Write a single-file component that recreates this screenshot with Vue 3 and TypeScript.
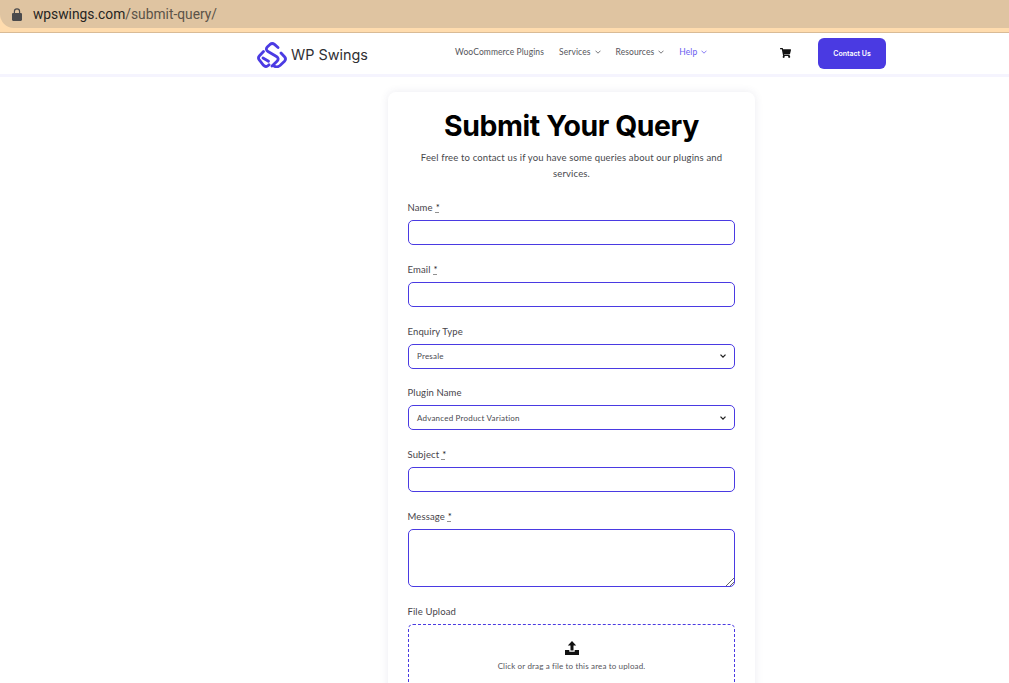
<script setup lang="ts">
interface Field {
  label: string
  required: boolean
  kind: 'input' | 'select' | 'textarea'
  value?: string
}
const navItems = [
  { label: 'Services', active: false },
  { label: 'Resources', active: false },
  { label: 'Help', active: true },
]
const fields: Field[] = [
  { label: 'Name', required: true, kind: 'input' },
  { label: 'Email', required: true, kind: 'input' },
  { label: 'Enquiry Type', required: false, kind: 'select', value: 'Presale' },
  { label: 'Plugin Name', required: false, kind: 'select', value: 'Advanced Product Variation' },
  { label: 'Subject', required: true, kind: 'input' },
  { label: 'Message', required: true, kind: 'textarea' },
]
</script>

<template>
  <div class="page">
    <div class="browser">
      <div class="urlbar">
        <svg class="lock" width="10" height="13" viewBox="0 0 10 13">
          <path fill="#4a4a4c" d="M1.2 5h.6V3.400a3.200 3.200 0 0 1 6.400 0V5h.6c.6 0 1.200.5 1.200 1.100v5.700c0 .6-.6 1.200-1.200 1.200H1.200C.6 13 0 12.400 0 11.800V6.100C0 5.500.6 5 1.200 5zM3 5h4V3.400a2 2 0 0 0-4 0z" />
        </svg>
        <span class="url"><span class="host">wpswings.com</span>/submit-query/</span>
      </div>
    </div>

    <header class="header">
      <div class="brand">
        <svg class="logo" width="30" height="26" viewBox="0 0 30 26" fill="none" stroke="#4b3be3" stroke-width="2.800" stroke-linecap="round" stroke-linejoin="round">
          <path d="M21 5.500 17.500 2.400C16 1.200 14.500 1.200 13 2.400L10.500 4.800C8.800 6.500 9 8.300 11 9.500L19.500 14.500C21.500 15.700 21.700 17.500 20 19.200L15 24" />
          <path d="M6.500 9.500 2.500 13.800C1.200 15.200 1.200 16.800 2.500 18.200L6.500 23.300C8 24.800 9.800 24.800 11.200 23.500L12 22.700" />
          <path d="M6 16 11.500 19.300" />
          <path d="M24 11 27.500 14.800C28.800 16.200 28.800 17.800 27.500 19.200L23 23.500C21 25.200 19 25.200 17 24" />
        </svg>
        <span class="brand-name">WP Swings</span>
      </div>
      <nav class="nav">
        <a class="nav-link plain">WooCommerce Plugins</a>
        <a v-for="item in navItems" :key="item.label" class="nav-link" :class="{ active: item.active }">
          {{ item.label }}
          <svg width="6" height="4" viewBox="0 0 6 4" fill="none" stroke="currentColor" stroke-width=".8"><path d="M.5.700 3 3.200 5.500.700" /></svg>
        </a>
      </nav>
      <svg class="cart" width="11" height="10" viewBox="0 0 576 512">
        <path fill="#111" d="M528.120 301.319l47.273-208C578.806 78.301 567.391 64 551.990 64H159.208l-9.166-44.810C147.758 8.021 137.930 0 126.529 0H24C10.745 0 0 10.745 0 24v16c0 13.255 10.745 24 24 24h69.883l70.248 343.435C147.325 417.100 136 435.222 136 456c0 30.928 25.072 56 56 56s56-25.072 56-56c0-15.674-6.447-29.835-16.824-40h209.647C430.447 426.165 424 440.326 424 456c0 30.928 25.072 56 56 56s56-25.072 56-56c0-22.172-12.888-41.332-31.579-50.405l5.517-24.276c3.413-15.018-8.002-29.319-23.403-29.319H218.117l-6.545-32h293.145c11.206 0 20.920-7.754 23.403-18.681z" />
      </svg>
      <a class="cta">Contact Us</a>
    </header>

    <main class="main">
      <section class="card">
        <h1 class="title">Submit Your Query</h1>
        <p class="intro">Feel free to contact us if you have some queries about our plugins and services.</p>

        <div class="fields">
          <div v-for="f in fields" :key="f.label" class="field">
            <label class="label">{{ f.label }}<abbr v-if="f.required" class="req">*</abbr></label>
            <div v-if="f.kind === 'input'" class="control"></div>
            <div v-else-if="f.kind === 'select'" class="control select">
              <span>{{ f.value }}</span>
              <svg width="6" height="4" viewBox="0 0 6 4" fill="none" stroke="#222" stroke-width="1.300"><path d="M.5.600 3 3.100 5.500.600" /></svg>
            </div>
            <div v-else class="control area">
              <svg class="grip" width="9" height="9" viewBox="0 0 9 9" stroke="#666" stroke-width="1"><path d="M1 9 9 1M5 9l4-4" /></svg>
            </div>
          </div>

          <div class="field">
            <label class="label">File Upload</label>
            <div class="drop">
              <svg width="14" height="14" viewBox="0 0 14 14" fill="#111">
                <path d="M7 0 11.200 4.500H8.500V9.500H5.500V4.500H2.800Z" />
                <path d="M0 9h4.300v1.800h5.400V9H14v5H0Z" />
              </svg>
              <span class="drop-text">Click or drag a file to this area to upload.</span>
            </div>
          </div>
        </div>
      </section>
    </main>
  </div>
</template>

<style>
html, body { margin: 0; background: #fff; overflow: hidden; }
</style>

<style scoped>
.page {
  width: 1009px;
  height: 683px;
  overflow: hidden;
  background: #fff;
  font-family: "Lato", "Liberation Sans", sans-serif;
}
.browser {
  height: 32px;
  background: #ffdcae;
  border-bottom: 1px solid #d9bb96;
}
.urlbar {
  height: 28px;
  background: #dfc4a1;
  border-radius: 0 0 0 14px;
  display: flex;
  align-items: center;
  padding-left: 12px;
  gap: 11px;
}
.lock { flex: none; }
.url {
  font: 13.800px "Roboto", sans-serif;
  color: #5b5348;
}
.host { color: #26241f; }
.header {
  height: 41px;
  display: flex;
  align-items: center;
  background: #fff;
  border-bottom: 3px solid #f5f4fe;
  padding-left: 257px;
}
.brand {
  display: flex;
  align-items: center;
  gap: 4px;
  width: 198px;
  padding-top: 2px;
}
.logo { flex: none; }
.brand-name {
  font: 14.400px "Inter", sans-serif;
  color: #2f2f33;
}
.nav {
  display: flex;
  align-items: center;
  gap: 15px;
  width: 325px;
  margin-top: -3px;
}
.nav-link {
  font-size: 8.500px;
  letter-spacing: 0.1px;
  color: #55555a;
  display: inline-flex;
  align-items: center;
  gap: 4px;
}
.nav-link.active { color: #6a5cf0; }
.cart { flex: none; margin-top: -2px; }
.cta {
  margin-left: 27px;
  width: 68px;
  height: 31px;
  border-radius: 6px;
  background: #4a3ae2;
  color: #fff;
  font: 600 7px/31px "Inter", sans-serif;
  text-align: center;
}
.main {
  display: flex;
  justify-content: center;
  padding: 15px 0 0 134px;
}
.card {
  width: 367px;
  box-sizing: border-box;
  padding: 15px 20px 0;
  border-radius: 8px;
  background: #fff;
  box-shadow: 0 0 9px rgba(60, 60, 110, 0.1);
}
.title {
  margin: 0;
  font: 700 28.400px/38px "Inter", sans-serif;
  letter-spacing: -0.4px;
  color: #000;
  text-align: center;
}
.intro {
  margin: 5px 0 0;
  font-size: 9.500px;
  line-height: 15.500px;
  letter-spacing: 0.15px;
  color: #47474c;
  text-align: center;
}
.fields {
  display: flex;
  flex-direction: column;
  gap: 17.800px;
  margin-top: 20px;
}
.label {
  display: block;
  font-size: 9.500px;
  line-height: 13px;
  letter-spacing: 0.12px;
  margin-bottom: 6px;
  color: #47444a;
  transform: translateX(-0.5px);
}
.req {
  margin-left: 3px;
  color: #222;
  text-decoration: underline dotted;
}
.control {
  height: 25px;
  box-sizing: border-box;
  border: 1px solid #4a3ae2;
  border-radius: 5px;
  background: #fff;
}
.select {
  display: flex;
  align-items: center;
  justify-content: space-between;
  padding: 0 8px;
  font-size: 8px;
  color: #4a4a50;
  letter-spacing: 0.2px;
}
.area {
  height: 58px;
  position: relative;
}
.grip {
  position: absolute;
  right: 0;
  bottom: 0;
}
.drop {
  height: 100px;
  box-sizing: border-box;
  border: 1px dashed #4a3ae2;
  border-radius: 5px;
  display: flex;
  flex-direction: column;
  align-items: center;
  padding-top: 16px;
  gap: 6px;
}
.drop-text {
  font-size: 8px;
  letter-spacing: 0.15px;
  color: #55555c;
}
</style>
